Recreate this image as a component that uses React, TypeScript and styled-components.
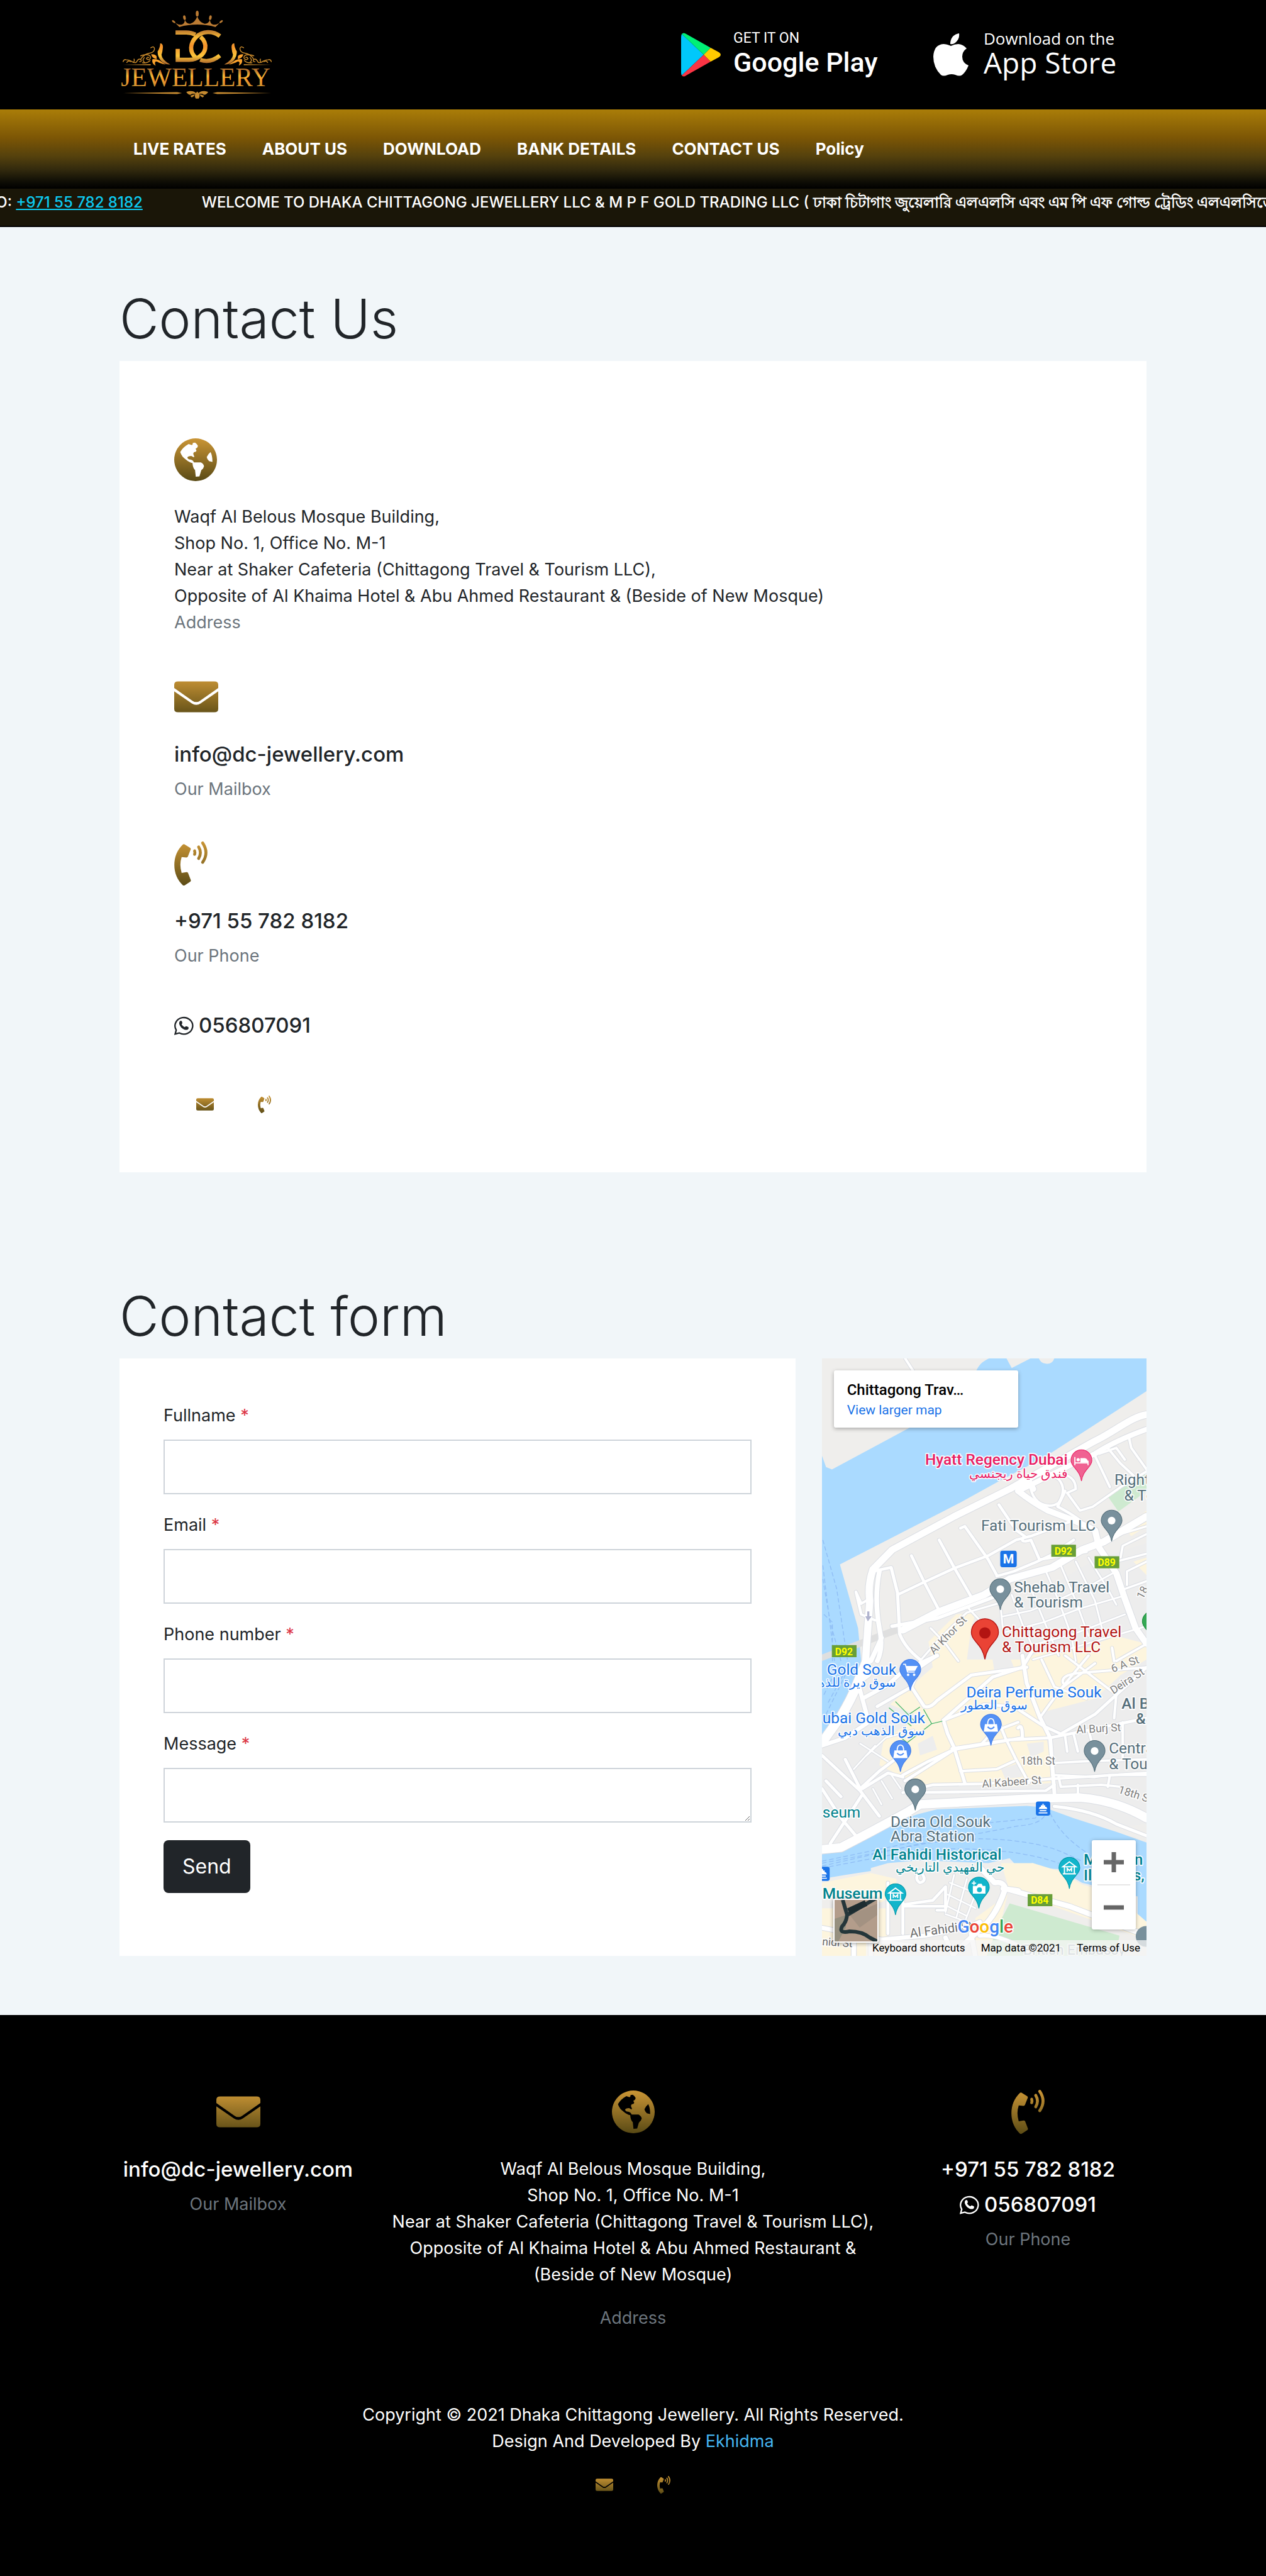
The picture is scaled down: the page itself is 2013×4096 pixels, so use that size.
import React, { useId } from "react";
import styled, { createGlobalStyle, css } from "styled-components";

const GlobalStyle = createGlobalStyle`
  *, *::before, *::after { box-sizing: border-box; }
  body {
    margin: 0;
    background: #f1f6f9;
    color: #212529;
    font-family: Inter, "Noto Sans", sans-serif;
    font-size: 27px;
    line-height: 42px;
  }
  h1, h2, p, ul { margin: 0; padding: 0; }
  a { color: inherit; text-decoration: none; }
`;

/* ---------- layout ---------- */

const Container = styled.div`
  width: 100%;
  max-width: 1633px;
  margin: 0 auto;
`;

const TopBar = styled.header`
  background: #000;
`;

const TopBarInner = styled(Container)`
  display: flex;
  align-items: center;
  justify-content: space-between;
  padding: 17px 0;
`;

const HomeLink = styled.a`
  display: flex;
`;

const Badges = styled.div`
  display: flex;
  gap: 35px;
  padding-right: 18px;
`;

const StoreBadge = styled.a<{ $gap: number; $inset: number }>`
  display: flex;
  align-items: center;
  gap: ${(p) => p.$gap}px;
  width: ${(p) => (p.$inset < 30 ? 361 : 352)}px;
  height: 105px;
  padding-left: ${(p) => p.$inset}px;
  background: linear-gradient(#000, #000) padding-box;
  color: #fff;
`;

const BadgeText = styled.span<{ $family: string }>`
  display: flex;
  flex-direction: column;
  padding-bottom: 6px;
  font-family: ${(p) => p.$family}, sans-serif;
  white-space: nowrap;
`;

const BadgeSmall = styled.span<{ $size: number }>`
  font-size: ${(p) => p.$size}px;
  line-height: 30px;
`;

const BadgeLarge = styled.span<{ $size: number }>`
  font-size: ${(p) => p.$size}px;
  font-weight: 500;
  line-height: 46px;
`;

const NavBar = styled.nav`
  background: linear-gradient(#aa7d08 0%, #7c5605 36%, #53400d 60%, #30280d 77%, #0d0c05 92%, #000 100%);
`;

const NavList = styled(Container).attrs({ as: "ul" })`
  display: flex;
  align-items: center;
  gap: 57px;
  height: 126px;
  padding: 0 22px;
  list-style: none;
  color: #fff;
  font-size: 26px;
  font-weight: 700;
`;

const Ticker = styled.div`
  overflow: hidden;
  padding: 1px 0 16px;
  border-bottom: 2px solid #000;
  background: #1a1608;
  color: #fff;
  font-size: 24px;
  font-weight: 500;
`;

const TickerTrack = styled.div`
  display: flex;
  gap: 94px;
  width: max-content;
  margin-left: -167px;
  white-space: nowrap;
`;

const Bengali = styled.span`
  font-weight: 600;
`;

const TickerLink = styled.a`
  color: #0dcaf0;
  text-decoration: underline;
`;

const Main = styled.main`
  display: flex;
  flex-direction: column;
  gap: 179px;
  padding: 96px 0 94px;
`;

const Heading = styled.h1`
  margin-bottom: 17px;
  font-size: 86px;
  font-weight: 300;
  line-height: 100px;
`;

const Card = styled.div<{ $pad: string }>`
  padding: ${(p) => p.$pad};
  background: #fff;
`;

const Columns = styled.div`
  display: grid;
  grid-template-columns: repeat(12, minmax(0, 1fr));
  gap: 42px;
`;

const Span = styled.div<{ $cols: number }>`
  grid-column: span ${(p) => p.$cols};
  display: grid;
`;

/* ---------- contact blocks ---------- */

const InfoList = styled.div`
  display: flex;
  flex-direction: column;
  gap: 62px;
`;

const Info = styled.section<{ $center?: boolean }>`
  display: flex;
  flex-direction: column;
  gap: 14px;
  ${(p) =>
    p.$center &&
    css`
      align-items: center;
      text-align: center;
    `}
`;

const IconSlot = styled.div`
  display: flex;
  align-items: center;
  height: 70px;
  margin-bottom: 21px;
`;

const Strong = styled.a`
  display: flex;
  align-items: center;
  gap: 8px;
  font-size: 33px;
  font-weight: 500;
`;

const ChatLine = styled.div`
  padding-top: 68px;
`;

const Muted = styled.span`
  color: #6c757d;
`;

const IconLinks = styled.div<{ $pad: string; $center?: boolean }>`
  display: flex;
  gap: 70px;
  align-items: center;
  justify-content: ${(p) => (p.$center ? "center" : "flex-start")};
  padding: ${(p) => p.$pad};
  a {
    display: flex;
    align-items: center;
    height: 28px;
  }
`;

/* ---------- form ---------- */

const Form = styled.form`
  display: flex;
  flex-direction: column;
  align-items: flex-start;
  gap: 28px;
`;

const Field = styled.div`
  display: flex;
  flex-direction: column;
  gap: 17px;
  width: 100%;
`;

const inputStyle = css`
  display: block;
  width: 100%;
  height: 87px;
  margin: 0;
  padding: 20px 28px;
  border: 2px solid #ced4da;
  border-radius: 0;
  background: #fff;
  color: #212529;
  font: inherit;
`;

const TextBox = styled.input`
  ${inputStyle}
`;
const TextArea = styled.textarea`
  ${inputStyle}
  resize: vertical;
`;

const Required = styled.span`
  color: #dc3545;
`;

const SendButton = styled.button`
  padding: 21px 30px;
  border: 0;
  border-radius: 8px;
  background: #212529;
  color: #fff;
  font-family: inherit;
  font-size: 32px;
  line-height: 42px;
`;

/* ---------- map ---------- */

const MapFrame = styled.div`
  position: relative;
  overflow: hidden;
  background: #efeeec;
  font-family: Roboto, sans-serif;
`;

const MapCanvas = styled.svg`
  position: absolute;
  inset: 0;
  width: 100%;
  height: 100%;
`;

const PlaceCard = styled.div`
  position: absolute;
  top: 19px;
  left: 19px;
  display: flex;
  flex-direction: column;
  width: 293px;
  height: 91px;
  padding: 14px 21px;
  border-radius: 3px;
  background: #fff;
  box-shadow: 0 2px 6px rgba(0, 0, 0, 0.3);
  color: #000;
  font-size: 24px;
  font-weight: 500;
  line-height: 34px;
  a {
    color: #1a73e8;
    font-size: 21px;
    font-weight: 400;
    line-height: 30px;
  }
`;

const ZoomControl = styled.div`
  position: absolute;
  right: 17px;
  bottom: 42px;
  display: flex;
  flex-direction: column;
  width: 70px;
  border-radius: 3px;
  background: #fff;
  box-shadow: 0 1px 6px rgba(0, 0, 0, 0.3);
`;

const ZoomButton = styled.button`
  display: grid;
  place-items: center;
  height: 70px;
  padding: 0;
  border: 0;
  background: none;
`;

const ZoomRule = styled.span`
  height: 2px;
  margin: 0 9px;
  background: #e6e6e6;
`;

const SatelliteButton = styled.button`
  position: absolute;
  left: 18px;
  bottom: 21px;
  width: 72px;
  height: 70px;
  padding: 0;
  overflow: hidden;
  border: 2px solid #fff;
  border-radius: 3px;
  background: #b09a86;
  box-shadow: 0 1px 6px rgba(0, 0, 0, 0.4);
  svg {
    display: block;
  }
`;

const Attribution = styled.div`
  position: absolute;
  right: 0;
  bottom: 0;
  display: flex;
  justify-content: space-between;
  width: 446px;
  padding: 0 10px;
  background: rgba(245, 245, 245, 0.75);
  color: #000;
  font-size: 17px;
  line-height: 25px;
`;

/* ---------- footer ---------- */

const Footer = styled.footer`
  padding: 119px 0 132px;
  background: #000;
  color: #fff;
`;

const FooterColumns = styled(Container)`
  display: grid;
  grid-template-columns: 377px 1fr 377px;
  gap: 42px;
`;

const FooterAddress = styled.p`
  margin-bottom: 13px;
`;

const Copyright = styled.p`
  margin-top: 112px;
  text-align: center;
  a {
    color: #45b5f0;
  }
`;

/* ---------- icons ---------- */

type IconProps = { box: string; width: number; height: number; children: React.ReactNode; y1: number; y2: number };

function GoldIcon({ box, width, height, children, y1, y2 }: IconProps) {
  const id = useId();
  return (
    <svg width={width} height={height} viewBox={box} aria-hidden="true">
      <defs>
        <linearGradient id={id} gradientUnits="userSpaceOnUse" x1="0" x2="0" y1={y1} y2={y2}>
          <stop offset="0" stopColor="#ca9535" />
          <stop offset="1" stopColor="#594a15" />
        </linearGradient>
      </defs>
      <g fill={`url(#${id})`} stroke={`url(#${id})`} strokeWidth="0" strokeLinecap="round">
        {children}
      </g>
    </svg>
  );
}

const Globe = () => (
  <GoldIcon box="24 57 234 234" width={68} height={68} y1={57} y2={291}>
    <path
      fillRule="evenodd"
      d="M141 57a117 117 0 1 0 .01 0ZM57 132Q72 105 103 88L118 93L124 92L126 82L138 80Q150 88 154 98L150 108L141 114L146 124L142 130L132 133L128 141L134 158L130 160L118 153Q98 153 96 162Q98 172 113 173Q122 174 127 180L132 189H170Q186 198 187 210Q184 224 172 232L162 265L142 267L138 230Q126 220 124 192Q108 190 88 173Q65 158 57 132ZM223 132Q234 155 233 186L215 182Q204 172 202 159Q210 142 223 132Z"
    />
  </GoldIcon>
);

const Envelope = ({ width }: { width: number }) => (
  <GoldIcon box="0 0 80 56" width={width} height={Math.round(width * 0.72)} y1={-8} y2={66}>
    <path d="M0 12V6Q0 0 7 0H73Q80 0 80 6V12L47 35Q40 40 33 35Z" />
    <path d="M0 18L32 40Q40 45 48 40L80 18V50Q80 56 73 56H7Q0 56 0 50Z" />
  </GoldIcon>
);

const Phone = ({ width }: { width: number }) => (
  <GoldIcon box="24 41 181 241" width={width} height={Math.round(width * 1.33)} y1={41} y2={290}>
    <path d="M70 58Q76 54 82 58L110 75Q116 80 113 86L98 124Q96 129 90 129L64 126Q50 168 64 213L90 209Q96 208 99 213L114 252Q116 257 111 261L82 280Q76 284 70 280Q24 235 24 169Q24 103 70 58Z" />
    <path d="M128 88Q136 80 142 88Q147 101 142 116Q135 122 128 117L127 110Q131 101 127 95Z" />
    <path d="M157 71Q176 102 157 134" fill="none" strokeWidth="16" />
    <path d="M179 49Q215 102 179 155" fill="none" strokeWidth="16" />
  </GoldIcon>
);

const WhatsApp = () => (
  <svg width="31" height="31" viewBox="0 0 106 106" aria-hidden="true">
    <path
      d="M11 78A48 45 0 1 1 28 94L5 100Z"
      fill="none"
      stroke="currentColor"
      strokeWidth="8"
      strokeLinejoin="miter"
    />
    <path
      fill="currentColor"
      d="M32 29Q39 25 43 33Q45 40 43 44L40 48Q48 59 58 62L63 57Q72 57 78 63Q80 70 74 75Q66 79 54 75Q35 67 28 47Q25 35 32 29Z"
    />
  </svg>
);

/* ---------- brand logo ---------- */

const wing = (
  <>
    <path
      fill="url(#dcGold)"
      d="M247 178Q262 178 262 198Q260 225 254 240Q256 268 302 293Q270 296 250 272Q232 248 233 222Q247 200 247 178Z"
    />
    <path fill="#f9a02c" d="M197 238Q218 236 227 248L228 264Q206 262 197 238ZM205 264Q236 262 250 276L276 294Q246 288 230 278Q212 274 222 300Q198 288 205 264Z" />
    <g fill="none" stroke="#c98a2c" strokeWidth="5" strokeLinecap="round">
      <path d="M196 202Q214 190 216 208Q214 228 186 232Q160 236 142 262" />
      <path d="M44 278Q48 264 62 268Q80 268 96 280Q116 290 122 272Q132 258 142 268Q146 280 134 278" />
      <path d="M140 246Q152 240 170 240Q196 240 194 258Q186 274 172 262Q176 250 184 256" />
      <path d="M64 282Q74 270 84 278M104 264Q108 276 100 280M150 284Q176 288 192 272M160 256Q146 272 160 280" />
    </g>
    <path d="M42 295L195 292V298Z" fill="#c98a2c" />
  </>
);

const Logo = () => (
  <svg width="242" height="140" viewBox="24 0 834 480" role="img" aria-label="DC Jewellery">
    <defs>
      <linearGradient id="dcGold" gradientUnits="userSpaceOnUse" x1="0" x2="0" y1="105" y2="282">
        <stop offset="0" stopColor="#b8742e" />
        <stop offset="0.22" stopColor="#f7bb38" />
        <stop offset="0.5" stopColor="#f6922b" />
        <stop offset="0.8" stopColor="#fbc53a" />
        <stop offset="1" stopColor="#b8742e" />
      </linearGradient>
      <linearGradient id="wordGold" gradientUnits="userSpaceOnUse" x1="0" x2="0" y1="326" y2="414">
        <stop offset="0" stopColor="#b8742e" />
        <stop offset="0.35" stopColor="#f9b836" />
        <stop offset="0.6" stopColor="#f3962c" />
        <stop offset="1" stopColor="#c98f30" />
      </linearGradient>
    </defs>
    <g fill="#bb7b33">
      <ellipse cx="450" cy="15" rx="8" ry="16" />
      <ellipse cx="380" cy="37" rx="7" ry="13" transform="rotate(-12 380 37)" />
      <ellipse cx="522" cy="37" rx="7" ry="13" transform="rotate(12 522 37)" />
      <ellipse cx="321" cy="59" rx="5" ry="11" transform="rotate(-52 321 59)" />
      <ellipse cx="581" cy="59" rx="5" ry="11" transform="rotate(52 581 59)" />
      <path d="M330 66Q352 80 368 74Q382 68 382 48Q390 72 412 70Q438 64 450 30Q462 64 490 70Q512 72 520 48Q520 68 534 74Q550 80 572 66L550 88Q450 62 352 88Z" />
    </g>
    <g fill="none" stroke="url(#dcGold)" strokeWidth="23">
      <path d="M331 118H390Q416 118 440 130" />
      <path d="M468 142C508 178 506 236 440 262Q425 268 405 268H343V208" />
      <path d="M574 138C534 106 478 110 445 142C408 178 408 226 440 254" />
      <path d="M466 268C510 284 546 268 574 245" />
    </g>
    {wing}
    <g transform="matrix(-1 0 0 1 900 0)">{wing}</g>
    <text x="441" y="413" textAnchor="middle" fontFamily="Liberation Serif, serif" fontSize="143" fill="url(#wordGold)">
      JEWELLERY
    </text>
    <g fill="#c58a30">
      <path d="M44 450L340 445L366 450L340 455ZM856 450L560 445L534 450L560 455Z" />
      <path d="M390 444Q404 436 424 440Q442 444 447 458Q420 448 414 460Q398 458 390 444ZM510 444Q496 436 476 440Q458 444 453 458Q480 448 486 460Q502 458 510 444Z" />
      <path d="M450 442Q472 464 458 480H442Q428 464 450 442ZM412 466Q428 456 438 458Q432 470 420 474ZM488 466Q472 456 462 458Q468 470 480 474Z" />
    </g>
  </svg>
);

const PlayLogo = () => (
  <svg width="64" height="70" viewBox="0 0 64 70" aria-hidden="true">
    <path d="M1 2Q0 4 0 7V63Q0 66 1 68L36 35Z" fill="#00c8fb" />
    <path d="M1 2Q4-1 8 2L47 24L36 35Z" fill="#00f076" />
    <path d="M1 68Q4 71 8 68L47 46L36 35Z" fill="#fb3445" />
    <path d="M47 24L60 31Q66 35 60 39L47 46L36 35Z" fill="#ffca00" />
  </svg>
);

const AppleLogo = () => (
  <svg width="56" height="68" viewBox="0 0 56 68" aria-hidden="true" fill="#fff">
    <path d="M41 0Q42 8 37 13Q33 18 27 17Q27 10 31 5Q35 1 41 0Z" />
    <path d="M53 24Q46 29 46 37Q46 47 56 51Q52 61 46 66Q42 69 35 66Q29 64 23 66Q16 69 12 66Q0 54 0 37Q1 18 16 17Q21 17 28 20Q34 17 40 17Q48 18 53 24Z" />
  </svg>
);

/* ---------- map drawing ---------- */

type Road = [string, number];

const roads: Road[] = [
  ["M410 22L450 90L520 200", 12],
  ["M1542 310C1470 320 1390 400 1290 450L900 690L640 830L350 1000L260 1100Q235 1180 245 1260L225 1568", 34],
  ["M1542 385Q1400 440 1300 510L1200 560L960 690", 26],
  ["M230 1570L180 1700Q160 1760 110 1850L21 1985", 44],
  ["M260 1110L345 1090L375 1220L385 1430Q410 1500 480 1560", 15],
  ["M180 1215L205 1330L270 1360M180 1215L205 1275L245 1250", 13],
  ["M290 1110Q265 1250 290 1400Q310 1500 280 1568M300 1450L250 1568", 22],
  ["M400 1410L560 1320L780 1230L900 1150L1100 1090L1240 1000L1340 960L1542 830", 36],
  ["M350 1390L560 1350L720 1285L830 1240", 18],
  ["M1010 690Q990 640 940 700Q1010 760 1080 800L1200 850L1300 900L1320 990L1400 1120L1440 1250L1490 1400L1542 1480", 30],
  ["M1000 640Q1060 590 1130 640Q1170 690 1130 760Q1090 790 1040 760Q990 720 1000 640", 12],
  ["M1130 610Q1210 620 1210 690L1170 710L1230 800L1290 780L1420 680L1542 600", 12],
  ["M1160 700L1125 780Q1180 810 1230 850", 14],
  ["M1360 480L1420 560L1480 620M1460 430L1470 480L1542 590M1300 520L1370 680M1320 510L1400 480L1440 540", 12],
  ["M850 770L930 900L970 930Q940 970 1000 950L1040 1050M670 890L690 880L800 1050L840 1130M570 950L640 1090L720 1240M440 1030L500 1165L570 1310", 14],
  ["M375 1230L500 1165L640 1095L800 1030L930 950L1000 930L1200 850", 14],
  ["M840 1135L920 1110L1030 1060L1090 1030L1200 950M1040 1050L1260 1010", 14],
  ["M860 1310L870 1420M910 1230L960 1380L1010 1500M1000 1200L1060 1360L1130 1540M1070 1110L1130 1260L1190 1440L1210 1568M1140 1080L1210 1260L1270 1440M1210 1060L1300 1260L1340 1430M1270 1040L1360 1200L1400 1280", 9],
  ["M870 1340L1000 1310L1140 1250L1300 1170L1400 1110M880 1420L1060 1370L1230 1300L1420 1240M960 1500L1200 1430L1440 1330M1010 1560L1260 1480L1542 1390", 9],
  ["M1340 960L1420 920L1542 880M1420 1040L1430 980L1542 920M1450 1180L1450 1110L1542 1060M1440 1200L1542 1160M1400 1060L1542 1020", 11],
  ["M480 1568Q580 1440 700 1320L860 1270M530 1400L600 1480L660 1568M700 1290L760 1360", 10],
  ["M1542 1480L1400 1568M1380 1500L1390 1568", 12],
  ["M21 2000L130 1960L240 1880L210 1760L190 1680L240 1640M210 1760L330 1690L400 1620L560 1540", 20],
  ["M1010 1510L960 1600L820 1650L590 1870L610 1940L640 2010L690 2190", 16],
  ["M960 1540L980 1680L1040 1850L1090 1960L1110 2240", 18],
  ["M400 2150L520 2080L640 2020L960 1960Q960 1880 940 1910M410 2180L640 2020M630 2015L900 1970L1090 1960L1542 1860", 15],
  ["M280 1800L440 1700L480 1600L560 1540M440 1700L500 1800Q530 1810 560 1770L720 1640L980 1600", 16],
  ["M590 1870L780 1790L920 1800L1060 1900L1140 1940L1300 1840L1542 1600", 15],
  ["M850 1880L880 1960L930 2070L990 2190M770 1990L820 1930L940 1880M670 2130L840 2120L920 2080", 13],
  ["M400 2240L540 2200L780 2195L1090 2170L1542 2140M420 2240L1070 2230L1110 2200", 14],
  ["M1040 1860L1140 1710L1270 1540M1140 1710L1300 1580M1150 1680Q1140 1640 1220 1630L1542 1600M1050 1560L1110 1700L1260 1760M1160 1540L1400 1740L1390 1860", 12],
  ["M1090 2090L1250 2080L1542 2070M1100 2150L1300 2160L1370 2150L1542 2150M1130 2160L1140 2210L1330 2200L1420 2210M1370 2150L1360 2210M1220 2200V2260M1200 1940L1220 2030M1160 1950L1170 2030M1270 1920L1290 2000M1430 1880L1430 2070", 12],
  ["M21 2530L110 2520L250 2440L420 2340L480 2300L1000 2270L1230 2265Q1400 2280 1542 2370", 44],
  ["M1110 2310Q1290 2330 1400 2400L1542 2460", 16],
  ["M21 2050L120 2150L200 2230L290 2360M130 2070L200 2220L290 2130L400 2040M21 2220L110 2370L180 2460M60 2500L210 2250M40 2180L110 2260M210 2220L330 2140L400 2160", 15],
  ["M230 2050L320 1960L450 1920M300 2300L260 2220M350 2270L300 2180M390 2220L340 2140M170 2120L270 2000M200 1990L330 2080", 8],
  ["M480 2640Q520 2690 480 2700Q450 2680 480 2640M600 2720L540 2790L410 2810M600 2720V2830M330 2700V2960M400 2790V2960M410 2820H590M560 2840H600", 14],
  ["M760 2620L830 2700Q870 2690 880 2730L1180 2820L1300 2870L1542 2970M880 2730Q840 2860 780 2920L700 3000L640 3060M870 2730L940 2740", 26],
  ["M620 2700L760 2760M610 2760L740 2830M610 2820L700 2870M640 2660L600 2850M700 2680L650 2880M760 2700L690 2900M600 2860L700 2900", 8],
  ["M21 2930L300 2990L500 2970L700 2930L760 2900M720 2960L740 3080M250 2990V3080M170 2990V3080M600 2980L640 3080M300 3000L560 3040", 22],
  ["M760 2970Q860 2960 1000 3060", 20],
];

function Roads() {
  return (
    <g fill="none" strokeLinejoin="round" strokeLinecap="round">
      {roads.map(([d, w]) => (
        <path key={d} d={d} stroke="#dadde3" strokeWidth={w + 6} />
      ))}
      {roads.map(([d, w]) => (
        <path key={d} d={d} stroke="#fff" strokeWidth={w} />
      ))}
    </g>
  );
}

function Pin({ x, y, fill, edge, size = 1, children }: { x: number; y: number; fill: string; edge: string; size?: number; children?: React.ReactNode }) {
  return (
    <g transform={`translate(${x} ${y}) scale(${size})`}>
      <path d="M0 0C-2-13-8-19-13-25C-17-30-19-33-19-38A19 19 0 0 1 19-38C19-33 17-30 13-25C8-19 2-13 0 0Z" fill={fill} stroke={edge} strokeWidth="1.2" />
      {children ?? <circle cy="-38" r="7" fill="#fff" />}
    </g>
  );
}

const MapLabel = styled.text<{ $size?: number; $weight?: number }>`
  font-size: ${(p) => p.$size ?? 28}px;
  font-weight: ${(p) => p.$weight ?? 400};
  paint-order: stroke;
  stroke: rgba(255, 255, 255, 0.9);
  stroke-width: 4px;
  stroke-linejoin: round;
`;

const slate = "#546e7a";
const blue = "#1a73e8";
const teal = "#00838f";
const grey = "#7d7d7d";

type Label = [string, number, number, string, { size?: number; weight?: number; end?: boolean; turn?: number }?];

const labels: Label[] = [
  ["Hyatt Regency Dubai", 448, 194, "#e91e63", { weight: 500, end: true }],
  ["فندق حياة ريجنسي", 448, 218, "#e91e63", { size: 23, end: true }],
  ["Right", 533, 231, slate],
  ["& To", 551, 259, slate],
  ["Fati Tourism LLC", 290, 315, slate],
  ["Shehab Travel", 350, 427, slate],
  ["& Tourism", 350, 455, slate],
  ["Chittagong Travel", 328, 508, "#b31412"],
  ["& Tourism LLC", 328, 536, "#b31412"],
  ["Al Khor St", 204, 541, grey, { size: 20, turn: -46 }],
  ["18", 585, 440, grey, { size: 20, turn: -62 }],
  ["Gold Souk", 9, 577, blue],
  ["سوق ديرة للذهب", 135, 599, blue, { size: 23, end: true }],
  ["6 A St", 530, 573, grey, { size: 20, turn: -20 }],
  ["Deira St", 531, 613, grey, { size: 20, turn: -33 }],
  ["Deira Perfume Souk", 263, 618, blue],
  ["سوق العطور", 375, 640, blue, { size: 23, end: true }],
  ["Al B", 546, 639, slate, { weight: 500 }],
  ["& T", 572, 667, slate, { weight: 500 }],
  ["ubai Gold Souk", 1, 665, blue],
  ["سوق الذهب دبي", 188, 687, blue, { size: 23, end: true }],
  ["Al Burj St", 464, 684, grey, { size: 20, turn: -3 }],
  ["Central", 523, 721, slate],
  ["& Tourism", 523, 749, slate],
  ["18th St", 362, 741, grey, { size: 20 }],
  ["Al Kabeer St", 292, 783, grey, { size: 20, turn: -4 }],
  ["18th St", 539, 792, grey, { size: 20, turn: 18 }],
  ["seum", 1, 837, teal],
  ["Deira Old Souk", 125, 854, slate],
  ["Abra Station", 125, 881, slate],
  ["Al Fahidi Historical", 92, 914, teal, { weight: 500 }],
  ["حي الفهيدي التاريخي", 333, 936, teal, { size: 23, end: true }],
  ["M", 477, 923, teal, { weight: 500 }],
  ["n", 585, 923, teal, { weight: 500, end: true }],
  ["Il", 477, 952, teal, { weight: 500 }],
  ["s,", 588, 952, teal, { weight: 500, end: true }],
  ["Museum", 1, 985, teal, { weight: 500 }],
  ["Al Fahidi St", 161, 1056, "#6b6b6b", { size: 23, turn: -7 }],
  ["nidi St", 0, 1070, "#6b6b6b", { size: 20, turn: 4 }],
  ["British Embassy", 367, 1087, "#8aa0a8", { size: 26 }],
];

const Shop = () => (
  <g fill="#fff">
    <path d="M-11-39H11L13-25H-13Z" />
    <path d="M-6-38Q-6-49 0-49Q6-49 6-38" fill="none" stroke="#fff" strokeWidth="2" />
    <path d="M-6-34Q0-27 6-34" fill="none" stroke="#4f8df5" strokeWidth="2.5" />
  </g>
);

const Temple = () => (
  <g fill="none" stroke="#fff" strokeWidth="2.2">
    <path d="M-12-40L0-49L12-40ZM-9-40V-28M9-40V-28M-12-27H12M-4-31V-37L0-33L4-37V-31" />
  </g>
);

const shields: [string, number, number][] = [
  ["D92", 418, 340],
  ["D89", 497, 361],
  ["D92", 18, 523],
  ["D84", 375, 977],
];

function MapDrawing() {
  return (
    <MapCanvas viewBox="0 0 592 1090" preserveAspectRatio="xMidYMid slice" role="img" aria-label="Map of Deira, Dubai">
      <g transform="translate(-8.2 -7.9) scale(.3891 .3571)">
        <path fill="#efeeec" d="M0 0H1560V3100H0Z" />
        <path fill="#ededed" d="M840 1350L1300 1050L1560 960V2400L21 2560V2000L420 1600Z" />
        <path fill="#aadaff" d="M806 22C780 35 760 50 748 78L640 260L435 375L68 590L40 578L21 520V1950L60 1910L150 1720L205 1568L190 1400L105 1075L650 770L850 650L1060 530L1542 190V22H1110Q1100 55 1070 50Q1045 48 1037 22H1000L910 72L885 22Z" />
        <path fill="#dfdfdf" d="M21 1535L380 1385V1425L21 1568Z" />
        <path fill="#fdf5de" d="M520 1470L650 1330L740 1325L720 1400L700 1560H960L1050 1520L1260 1500L1400 1440L1542 1480V1560L1420 1640L1300 1760L1050 1830L1080 2000L1100 2100V2190L900 2210L520 2200L400 2160L290 2100L310 1970L480 1850L340 1790L540 1600Z" />
        <path fill="#fdf5de" d="M1440 890L1542 800V880L1470 930ZM1480 1060L1542 1040V1130Z" />
        <path fill="#ededed" d="M820 1560L900 1545L920 1600L830 1630ZM980 1990L1060 1980V2030L1000 2060ZM860 2120L940 2090L960 2160L880 2170ZM470 1990L540 1950L560 2020L480 2050Z" />
        <path fill="#ceead0" d="M1355 720L1400 690L1450 670L1542 610V700L1410 805Z" />
        <path fill="#aadaff" d="M21 2545L110 2535L200 2480L330 2400L470 2350L560 2325L980 2308L1060 2315L1200 2370L1400 2440L1542 2495V2900L1500 2860V2770L1240 2700L1130 2630L1035 2625L1010 2600L930 2610L900 2575L800 2600L480 2585L330 2600L250 2625V2640L130 2660L21 2680Z" />
        <path fill="#fdf5de" d="M21 2700L250 2650L370 2680V2750L300 2800L21 2780ZM860 2600H1010L1130 2640L1240 2710L1490 2780V2850L1542 2900V2990L900 2740ZM21 2830H330V3080H21ZM740 2880L890 2760L860 2900L830 3080H740Z" />
        <path fill="#ceead0" d="M900 2805L1415 2970L1395 3080H790L850 2910Z" />
        <Roads />
        <g fill="none" stroke="#8fbdf5" strokeWidth="4" strokeDasharray="22 12">
          <path d="M25 950L90 1200L140 1560M25 1080L80 1568M25 1150L60 1370L110 1568M30 1330L70 1370V1568" />
          <path d="M30 1740L100 1590M50 1780L140 1600M40 1840L130 1640" />
          <path d="M21 2590L460 2490L560 2420L1020 2370L1060 2330M21 2600L700 2460L940 2410Q1060 2400 1070 2340M21 2615L480 2500L760 2475Q1000 2480 1140 2540L1240 2590M21 2625L480 2530Q900 2510 1130 2600M1090 2345Q1140 2460 1260 2545" />
        </g>
        <g fill="none" stroke="#45b56a" strokeWidth="4">
          <path d="M365 1775L460 1880M335 1807L440 1900M497 1815L535 1888L585 1875M480 1803L430 1840M535 1888L420 1985M380 1950L420 1985" />
        </g>
        <path fill="#b0b3ce" d="M233 1315H243V1340H254L236 1365L224 1340H233Z" />
      </g>

      {shields.map(([t, x, y]) => (
        <g key={`${t}${x}`}>
          <rect x={x} y={y} width="45" height="22" fill="#689f38" />
          <text x={x + 22} y={y + 18} textAnchor="middle" fontSize="18" fontWeight="700" fill="#ff0">
            {t}
          </text>
        </g>
      ))}

      <rect x="325" y="351" width="30" height="30" rx="4" fill="#1a73e8" />
      <text x="340" y="374" textAnchor="middle" fontSize="23" fontWeight="700" fill="#fff">
        M
      </text>

      {labels.map(([t, x, y, fill, o = {}]) => (
        <MapLabel
          key={`${t}${x}${y}`}
          x={x}
          y={y}
          fill={fill}
          $size={o.size}
          $weight={o.weight}
          textAnchor={o.end ? "end" : "start"}
          transform={o.turn ? `rotate(${o.turn} ${x} ${y})` : undefined}
        >
          {t}
        </MapLabel>
      ))}

      {[403, 1].map((x, i) => (
        <g key={x} transform={`translate(${x} ${i ? 940 : 821})`}>
          <rect x="-13" y="-13" width="26" height="26" rx="4" fill="#1a73e8" />
          <path d="M-8 8H8M-6 4H6" stroke="#fff" strokeWidth="2" />
          <path d="M-8 1L-6-3H-4V-6H-1V-9H1V-6H4V-3H6L8 1Z" fill="#fff" />
        </g>
      ))}

      <Pin x={473} y={224} fill="#f06292" edge="#e91e63">
        <path d="M-12-44V-29M12-37V-29M-12-33H12" stroke="#fff" strokeWidth="2" fill="none" />
        <path d="M-2-34V-42H6Q12-41 12-34Z" fill="#fff" />
        <circle cx="-6" cy="-39" r="3" fill="#fff" />
      </Pin>
      <Pin x={528} y={334} fill="#78909c" edge="#546e7a" />
      <Pin x={325} y={459} fill="#78909c" edge="#546e7a" />
      <Pin x={170} y={824} fill="#78909c" edge="#546e7a" />
      <Pin x={497} y={754} fill="#78909c" edge="#546e7a" />
      <Pin x={603} y={518} fill="#34a853" edge="#1e8e3e">
        <circle cy="-38" r="1" fill="#34a853" />
      </Pin>
      <Pin x={297} y={549} fill="#ea4335" edge="#b31412" size={1.3}>
        <circle cy="-37" r="8" fill="#b31412" />
      </Pin>
      <Pin x={161} y={606} fill="#5491f5" edge="#3f7be8">
        <path d="M-13-48H-9L-5-34H8M-7-44H12L8-37H-5" fill="none" stroke="#fff" strokeWidth="2" />
        <path d="M-7-44H12L9-37H-5Z" fill="#fff" />
        <circle cx="-4" cy="-29" r="2.3" fill="#fff" />
        <circle cx="7" cy="-29" r="2.3" fill="#fff" />
      </Pin>
      <Pin x={308} y={706} fill="#5491f5" edge="#3f7be8">
        <Shop />
      </Pin>
      <Pin x={143} y={754} fill="#5491f5" edge="#3f7be8">
        <Shop />
      </Pin>
      <Pin x={451} y={967} fill="#12b5cb" edge="#0097a7">
        <Temple />
      </Pin>
      <Pin x={134} y={1015} fill="#12b5cb" edge="#0097a7">
        <Temple />
      </Pin>
      <Pin x={286} y={1003} fill="#12b5cb" edge="#0097a7">
        <path d="M-11-41H-4L-1-45H5L7-41H12V-27H-11Z" fill="#fff" />
        <path d="M-13-46H-5M-9-50V-42" stroke="#fff" strokeWidth="2" />
        <circle cx="1" cy="-34" r="4.5" fill="#12b5cb" />
      </Pin>
      <circle cx="591" cy="1054" r="19" fill="#78909c" />

      <MapLabel x="247" y="1047" $size={32} $weight={500}>
        <tspan fill="#4285f4">G</tspan>
        <tspan fill="#ea4335">o</tspan>
        <tspan fill="#fbbc04">o</tspan>
        <tspan fill="#4285f4">g</tspan>
        <tspan fill="#34a853">l</tspan>
        <tspan fill="#ea4335">e</tspan>
      </MapLabel>
    </MapCanvas>
  );
}

function LocationMap() {
  return (
    <MapFrame>
      <MapDrawing />
      <PlaceCard>
        <span>Chittagong Trav…</span>
        <a href="#map">View larger map</a>
      </PlaceCard>
      <Attribution>
        <a href="#shortcuts">Keyboard shortcuts</a>
        <span>Map data ©2021</span>
        <a href="#terms">Terms of Use</a>
      </Attribution>
      <SatelliteButton type="button" aria-label="Show satellite imagery">
        <svg width="68" height="66" viewBox="0 0 68 66" aria-hidden="true">
          <rect width="68" height="66" fill="#b39d8b" />
          <path d="M24 24L68 6V24L40 44Z" fill="#a39282" />
          <path d="M0 30L18 24V44L6 66H0Z" fill="#96907f" />
          <path d="M13 0L20 24L68-4M20 20Q20 34 12 42Q6 54 24 50Q44 50 56 60L68 66" fill="none" stroke="#24363a" strokeWidth="6" />
          <path d="M22 18L50 5" stroke="#1c2c30" strokeWidth="10" />
        </svg>
      </SatelliteButton>
      <ZoomControl>
        <ZoomButton type="button" aria-label="Zoom in">
          <svg width="32" height="32" viewBox="0 0 32 32" stroke="#666" strokeWidth="7" aria-hidden="true">
            <path d="M0 16H32M16 0V32" />
          </svg>
        </ZoomButton>
        <ZoomRule />
        <ZoomButton type="button" aria-label="Zoom out">
          <svg width="32" height="8" viewBox="0 0 32 8" stroke="#666" strokeWidth="7" aria-hidden="true">
            <path d="M0 4H32" />
          </svg>
        </ZoomButton>
      </ZoomControl>
    </MapFrame>
  );
}

/* ---------- page ---------- */

const navItems = ["LIVE RATES", "ABOUT US", "DOWNLOAD", "BANK DETAILS", "CONTACT US", "Policy"];

const fields = [
  { id: "fullname", label: "Fullname", type: "text" },
  { id: "email", label: "Email", type: "email" },
  { id: "phone", label: "Phone number", type: "tel" },
];

const SocialLinks = ({ pad, center }: { pad: string; center?: boolean }) => (
  <IconLinks $pad={pad} $center={center}>
    <a href="mailto:info@dc-jewellery.com" aria-label="Send an email">
      <Envelope width={28} />
    </a>
    <a href="tel:+971557828182" aria-label="Call us">
      <Phone width={21} />
    </a>
  </IconLinks>
);

export default function App() {
  return (
    <>
      <GlobalStyle />
      <TopBar>
        <TopBarInner>
          <HomeLink href="#home">
            <Logo />
          </HomeLink>
          <Badges>
            <StoreBadge href="#google-play" $inset={26} $gap={19}>
              <PlayLogo />
              <BadgeText $family="Roboto">
                <BadgeSmall $size={23}>GET IT ON</BadgeSmall>
                <BadgeLarge $size={43}>Google Play</BadgeLarge>
              </BadgeText>
            </StoreBadge>
            <StoreBadge href="#app-store" $inset={31} $gap={24}>
              <AppleLogo />
              <BadgeText $family="Open Sans">
                <BadgeSmall $size={26}>Download on the</BadgeSmall>
                <BadgeLarge $size={46}>App Store</BadgeLarge>
              </BadgeText>
            </StoreBadge>
          </Badges>
        </TopBarInner>
      </TopBar>
      <NavBar>
        <NavList>
          {navItems.map((item) => (
            <li key={item}>
              <a href={`#${item.toLowerCase().replace(" ", "-")}`}>{item}</a>
            </li>
          ))}
        </NavList>
      </NavBar>
      <Ticker>
        <TickerTrack>
          <span>
            WHATSAPP NO: <TickerLink href="tel:+971557828182">+971 55 782 8182</TickerLink>
          </span>
          <span>
            WELCOME TO DHAKA CHITTAGONG JEWELLERY LLC &amp; M P F GOLD TRADING LLC ({" "}
            <Bengali lang="bn">ঢাকা চিটাগাং জুয়েলারি এলএলসি এবং এম পি এফ গোল্ড ট্রেডিং এলএলসিতে স্বাগতম</Bengali> )
          </span>
        </TickerTrack>
      </Ticker>

      <Main>
        <Container>
          <Heading>Contact Us</Heading>
          <Card $pad="122px 87px 94px">
            <InfoList>
              <Info>
                <IconSlot>
                  <Globe />
                </IconSlot>
                <p>
                  Waqf Al Belous Mosque Building,
                  <br />
                  Shop No. 1, Office No. M-1
                  <br />
                  Near at Shaker Cafeteria (Chittagong Travel &amp; Tourism LLC),
                  <br />
                  Opposite of Al Khaima Hotel &amp; Abu Ahmed Restaurant &amp; (Beside of New Mosque)
                  <br />
                  <Muted>Address</Muted>
                </p>
              </Info>
              <Info>
                <IconSlot>
                  <Envelope width={70} />
                </IconSlot>
                <Strong href="mailto:info@dc-jewellery.com">info@dc-jewellery.com</Strong>
                <Muted>Our Mailbox</Muted>
              </Info>
              <Info>
                <IconSlot>
                  <Phone width={53} />
                </IconSlot>
                <Strong href="tel:+971557828182">+971 55 782 8182</Strong>
                <Muted>Our Phone</Muted>
              </Info>
            </InfoList>
            <ChatLine>
              <Strong href="#whatsapp">
                <WhatsApp />
                056807091
              </Strong>
            </ChatLine>
            <SocialLinks pad="91px 35px 0" />
          </Card>
        </Container>

        <Container>
          <Heading as="h2">Contact form</Heading>
          <Columns>
            <Span $cols={8}>
              <Card $pad="70px 70px 100px">
                <Form>
                  {fields.map((f) => (
                    <Field key={f.id}>
                      <label htmlFor={f.id}>
                        {f.label} <Required>*</Required>
                      </label>
                      <TextBox id={f.id} type={f.type} />
                    </Field>
                  ))}
                  <Field>
                    <label htmlFor="message">
                      Message <Required>*</Required>
                    </label>
                    <TextArea id="message" />
                  </Field>
                  <SendButton type="button">Send</SendButton>
                </Form>
              </Card>
            </Span>
            <Span $cols={4}>
              <LocationMap />
            </Span>
          </Columns>
        </Container>
      </Main>

      <Footer>
        <FooterColumns>
          <Info $center>
            <IconSlot>
              <Envelope width={70} />
            </IconSlot>
            <Strong href="mailto:info@dc-jewellery.com">info@dc-jewellery.com</Strong>
            <Muted>Our Mailbox</Muted>
          </Info>
          <Info $center>
            <IconSlot>
              <Globe />
            </IconSlot>
            <FooterAddress>
              Waqf Al Belous Mosque Building,
              <br />
              Shop No. 1, Office No. M-1
              <br />
              Near at Shaker Cafeteria (Chittagong Travel &amp; Tourism LLC),
              <br />
              Opposite of Al Khaima Hotel &amp; Abu Ahmed Restaurant &amp;
              <br />
              (Beside of New Mosque)
            </FooterAddress>
            <Muted>Address</Muted>
          </Info>
          <Info $center>
            <IconSlot>
              <Phone width={53} />
            </IconSlot>
            <Strong href="tel:+971557828182">+971 55 782 8182</Strong>
            <Strong href="#whatsapp">
              <WhatsApp />
              056807091
            </Strong>
            <Muted>Our Phone</Muted>
          </Info>
        </FooterColumns>
        <Copyright>
          Copyright © 2021 Dhaka Chittagong Jewellery. All Rights Reserved.
          <br />
          Design And Developed By <a href="#ekhidma">Ekhidma</a>
        </Copyright>
        <SocialLinks pad="34px 0 0" center />
      </Footer>
    </>
  );
}
